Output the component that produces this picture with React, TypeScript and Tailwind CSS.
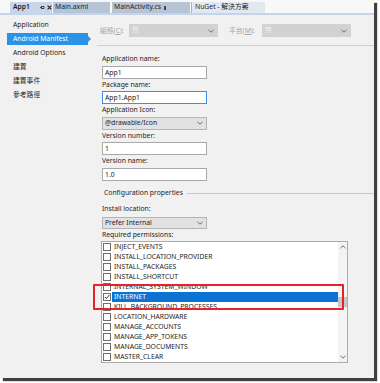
import React from "react";

const permissions: string[] = [
  "INJECT_EVENTS",
  "INSTALL_LOCATION_PROVIDER",
  "INSTALL_PACKAGES",
  "INSTALL_SHORTCUT",
  "INTERNAL_SYSTEM_WINDOW",
  "INTERNET",
  "KILL_BACKGROUND_PROCESSES",
  "LOCATION_HARDWARE",
  "MANAGE_ACCOUNTS",
  "MANAGE_APP_TOKENS",
  "MANAGE_DOCUMENTS",
  "MASTER_CLEAR",
];

const navItems = ["Application", "Android Manifest", "Android Options", "建置", "建置事件", "參考路徑"];

const Chevron = ({ up = false }: { up?: boolean }) => (
  <svg width="6" height="4" viewBox="0 0 6 4" className={up ? "rotate-180" : ""}>
    <path d="M0.5 0.8 L3 3.2 L5.5 0.8" fill="none" stroke="#6d6d6d" strokeWidth="1" />
  </svg>
);

const Field = ({ label, value, focused = false }: { label: string; value: string; focused?: boolean }) => (
  <>
    <div className="h-[12.5px] leading-[12.5px]">{label}</div>
    <div
      className={`h-[13px] w-[105px] bg-white px-[2px] leading-[11px] border ${
        focused ? "border-[#3d8ee6]" : "border-[#a9a9a9]"
      }`}
    >
      {value}
    </div>
  </>
);

const App = () => {
  return (
    <div className="w-[380px] h-[383px] bg-white font-['Noto_Sans','Noto_Sans_CJK_TC',sans-serif] text-[6.8px] text-[#1e1e1e]">
      <div className="w-[374px] h-[378px] bg-[#f1f1f1] shadow-[3px_3px_1px_rgba(0,0,0,0.75)] flex flex-col">
        {/* tab strip */}
        <div className="h-[15px] bg-[#f8f8f9] border-b-2 border-[#c3d4ec] flex items-end pl-[10px] shrink-0">
          <div className="h-[11px] w-[42px] bg-[#c8d6ea] flex items-center pl-[3px] font-semibold">
            <span>App1</span>
            <svg width="5" height="5" viewBox="0 0 5 5" className="ml-[10px]">
              <path d="M0 2.5 H1.5 M1.5 1 V4 M1.5 1.5 H4 V3.5 H1.5" fill="none" stroke="#333" strokeWidth="0.9" />
            </svg>
            <svg width="5" height="5" viewBox="0 0 5 5" className="ml-[2px]">
              <path d="M0.6 0.6 L4.4 4.4 M4.4 0.6 L0.6 4.4" stroke="#222" strokeWidth="1.1" />
            </svg>
          </div>
          <div className="h-[11px] w-[57px] ml-[1px] bg-[#b7c4d6] flex items-center pl-[2px]">Main.axml</div>
          <div className="h-[11px] w-[78px] ml-[2px] bg-[#b7c4d6] flex items-center pl-[2px]">
            <span>MainActivity.cs</span>
            <span className="ml-[3px] w-[2px] h-[4px] bg-[#444]" />
          </div>
          <div className="h-[11px] w-[74px] ml-[1px] bg-[#e3e8f0] border-l border-[#9fb3cf] flex items-center pl-[3px]">
            NuGet - 解決方案
          </div>
        </div>

        <div className="flex flex-1">
          {/* left navigation */}
          <div className="w-[92px] shrink-0 pt-[3px]">
            {navItems.map((item) =>
              item === "Android Manifest" ? (
                <div key={item} className="h-[14px] flex items-center">
                  <div className="relative ml-[7px] w-[81px] h-[12px] bg-[#2a93e8] text-white pl-[6px] leading-[12px]">
                    {item}
                    <span className="absolute right-[-3px] top-[3px] w-0 h-0 border-y-[3px] border-y-transparent border-l-[3px] border-l-[#2a93e8]" />
                  </div>
                </div>
              ) : (
                <div key={item} className="h-[14px] leading-[14px] pl-[13px]">
                  {item}
                </div>
              )
            )}
          </div>

          {/* main */}
          <div className="flex-1 flex flex-col">
            <div className="ml-[5px] h-[31px] pt-[9px] border-b border-[#cfcfcf] flex items-start text-[#a3a3a3]">
              <div className="w-[32px] pl-[3px] leading-[13px]">
                組態(<span className="underline">C</span>):
              </div>
              <div className="w-[89px] h-[13px] bg-[#d2d2d2] flex items-center justify-between pl-[3px] pr-[4px] text-[#ececec]">
                <span>無</span>
                <Chevron />
              </div>
              <div className="ml-[11px] w-[33px] leading-[13px]">
                平台(<span className="underline">M</span>):
              </div>
              <div className="w-[89px] h-[13px] bg-[#d2d2d2] flex items-center justify-between pl-[3px] pr-[4px] text-[#ececec]">
                <span>無</span>
                <Chevron />
              </div>
            </div>

            <div className="pl-[10px] pt-[7px] flex flex-col">
              <Field label="Application name:" value="App1" />
              <Field label="Package name:" value="App1.App1" focused />
              <div className="h-[12.5px] leading-[12.5px]">Application Icon:</div>
              <div className="h-[13px] w-[105px] bg-[#e2e2e2] border border-[#b4b4b4] flex items-center justify-between pl-[2px] pr-[3px]">
                <span>@drawable/Icon</span>
                <Chevron />
              </div>
              <Field label="Version number:" value="1" />
              <Field label="Version name:" value="1.0" />

              <div className="mt-[7.5px] h-[11px] flex items-center pl-[2px]">
                <span>Configuration properties</span>
                <div className="flex-1 ml-[4px] border-t border-[#c9c9c9]" />
              </div>

              <div className="mt-[4px] h-[12px] leading-[12px]">Install location:</div>
              <div className="mt-[2px] h-[12px] w-[105px] bg-[#e2e2e2] border border-[#b4b4b4] flex items-center justify-between pl-[2px] pr-[3px]">
                <span>Prefer Internal</span>
                <Chevron />
              </div>
              <div className="h-[12px] leading-[12px]">Required permissions:</div>

              {/* permissions list */}
              <div className="relative ml-[-1px] w-[247px] h-[122px] bg-white border border-[#ababab] flex">
                <div className="flex-1 overflow-hidden">
                  {permissions.map((p) => {
                    const selected = p === "INTERNET";
                    return (
                      <div key={p} className="h-[10px] flex items-center pl-[1px]">
                        <div className="w-[8px] h-[8px] border border-[#6f6f6f] bg-white flex items-center justify-center shrink-0">
                          {selected && (
                            <svg width="6" height="6" viewBox="0 0 6 6">
                              <path d="M0.8 3 L2.4 4.6 L5.3 1" fill="none" stroke="#333" strokeWidth="1" />
                            </svg>
                          )}
                        </div>
                        <div
                          className={`ml-[1px] flex-1 h-[10px] leading-[10px] pl-[2px] ${
                            selected ? "bg-[#0a73d4] text-white" : ""
                          }`}
                        >
                          {p}
                        </div>
                      </div>
                    );
                  })}
                </div>
                <div className="w-[9px] bg-[#f3f3f3] flex flex-col items-center">
                  <div className="h-[10px] flex items-center">
                    <Chevron up />
                  </div>
                  <div className="mt-[45px] w-[9px] h-[10px] bg-[#c6c6c6]" />
                  <div className="flex-1" />
                  <div className="h-[10px] flex items-center">
                    <Chevron />
                  </div>
                </div>

                {/* annotation box */}
                <div className="absolute left-[-9px] top-[42px] w-[251px] h-[26px] border-2 border-[#e3232c] rounded-[1px]" />
              </div>
            </div>
          </div>
        </div>
      </div>
    </div>
  );
};

export default App;
